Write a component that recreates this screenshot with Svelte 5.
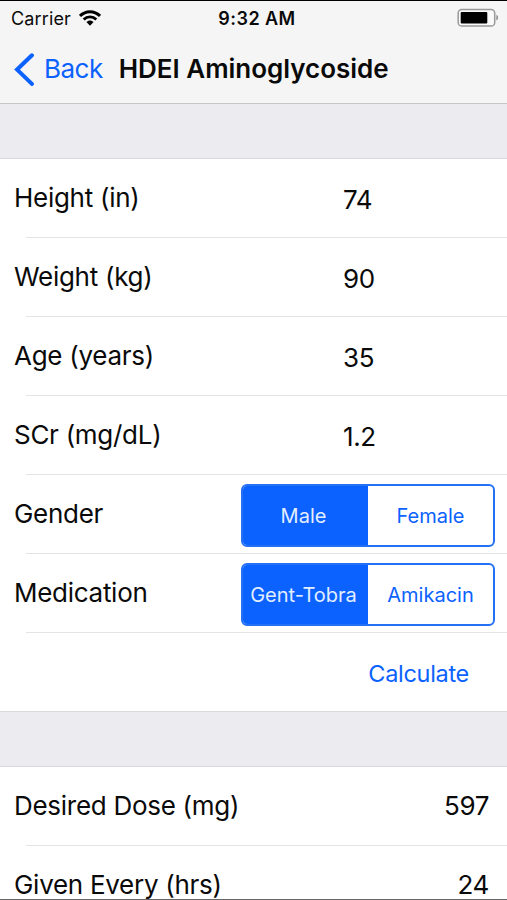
<script lang="ts">
  type Field = { label: string; value: string };
  type Choice = { label: string; options: string[]; selected: string };

  let fields: Field[] = [
    { label: 'Height (in)', value: '74' },
    { label: 'Weight (kg)', value: '90' },
    { label: 'Age (years)', value: '35' },
    { label: 'SCr (mg/dL)', value: '1.2' },
  ];

  let choices: Choice[] = [
    { label: 'Gender', options: ['Male', 'Female'], selected: 'Male' },
    { label: 'Medication', options: ['Gent-Tobra', 'Amikacin'], selected: 'Gent-Tobra' },
  ];

  let results: Field[] = [
    { label: 'Desired Dose (mg)', value: '597' },
    { label: 'Given Every (hrs)', value: '24' },
  ];
</script>

<div class="screen">
  <header>
    <div class="status-bar">
      <div class="carrier">
        <span>Carrier</span>
        <svg width="22" height="16" viewBox="0 0 22 16">
          <g fill="none" stroke="#000" stroke-width="2.9">
            <path d="M1 5.9C6.7 .3 15.3 .3 21 5.9" />
            <path d="M4.7 9.5C8.3 6 13.7 6 17.3 9.5" />
          </g>
          <path d="M7.4 12.1C9.5 10 12.5 10 14.6 12.1L11 15.7Z" />
        </svg>
      </div>
      <span class="time">9:32 AM</span>
      <svg class="battery" width="42" height="20" viewBox="0 0 42 20">
        <rect x="1.2" y="1.4" width="36.5" height="16.6" rx="3.6" fill="#fafafa" stroke="#999" stroke-width="1.5" />
        <rect x="3.7" y="3.9" width="26.6" height="11.6" rx="1" />
        <path d="M39.4 6.8C41.6 7.8 41.6 11.6 39.4 12.6Z" fill="#888" />
      </svg>
    </div>
    <div class="nav-bar">
      <button class="back">
        <svg width="20" height="34" viewBox="0 0 20 34">
          <path d="M17.9 3.3L3.1 17.6L17.9 31.9" fill="none" stroke="#0b62ff" stroke-width="4.1" stroke-linecap="round" />
        </svg>
        <span>Back</span>
      </button>
      <h1>HDEI Aminoglycoside</h1>
    </div>
  </header>

  <section>
    {#each fields as field}
      <div class="row">
        <span class="label">{field.label}</span>
        <span class="input">{field.value}</span>
      </div>
    {/each}
    {#each choices as choice}
      <div class="row">
        <span class="label">{choice.label}</span>
        <div class="segmented">
          {#each choice.options as option}
            <button class:selected={option === choice.selected} on:click={() => (choice.selected = option)}>
              {option}
            </button>
          {/each}
        </div>
      </div>
    {/each}
    <div class="row">
      <button class="calculate">Calculate</button>
    </div>
  </section>

  <section>
    {#each results as result}
      <div class="row">
        <span class="label">{result.label}</span>
        <span class="result">{result.value}</span>
      </div>
    {/each}
  </section>
</div>

<style>
  :global(body) {
    background: #ebebf0;
  }

  .screen {
    box-sizing: border-box;
    height: 900px;
    overflow: hidden;
    border-top: 1px solid #000;
    border-bottom: 1px solid #666;
    font-family: Inter, 'Liberation Sans', sans-serif;
    color: #0a0a0a;
  }

  button {
    margin: 0;
    padding: 0;
    border: 0;
    background: none;
    font: inherit;
    color: #0b62ff;
  }

  header {
    box-sizing: border-box;
    height: 103px;
    background: #f5f5f5;
    border-bottom: 1px solid #c6c6ca;
  }

  .status-bar {
    display: grid;
    grid-template-columns: 1fr auto 1fr;
    align-items: center;
    height: 34px;
    padding: 0 8px 0 11px;
    font-size: 18px;
  }

  .carrier {
    display: flex;
    align-items: center;
    gap: 8px;
    letter-spacing: 0.15px;
  }

  .time {
    padding-left: 4px;
    font-weight: 600;
    letter-spacing: 0.45px;
  }

  .battery {
    justify-self: end;
  }

  .nav-bar {
    display: flex;
    align-items: center;
    height: 67px;
    padding-left: 14px;
  }

  .back {
    display: flex;
    align-items: center;
    gap: 10px;
    font-size: 26px;
    letter-spacing: -0.5px;
  }

  h1 {
    margin: 0 0 0 16px;
    font-size: 26px;
    font-weight: 600;
    letter-spacing: -0.02px;
  }

  section {
    margin-top: 54px;
    background: #fff;
    border-top: 1px solid #d9d9dd;
    border-bottom: 1px solid #d9d9dd;
  }

  .row {
    box-sizing: border-box;
    display: flex;
    align-items: center;
    justify-content: space-between;
    height: 79px;
    padding: 0 12px 2px 14px;
    font-size: 26px;
    letter-spacing: -0.4px;
    /* separator starts past the label inset */
    background: linear-gradient(#e4e4e6, #e4e4e6) 26px 100% / 100% 1px no-repeat;
  }

  .row:last-child {
    height: 78px;
    background: none;
  }

  .label {
    letter-spacing: -0.28px;
  }

  .input {
    width: 152px;
    padding-top: 4px;
  }

  .result {
    padding-right: 6px;
  }

  .segmented {
    box-sizing: border-box;
    display: grid;
    grid-template-columns: 1fr 1fr;
    width: 254px;
    height: 63px;
    margin-top: 4px;
    overflow: hidden;
    border: 2px solid #2471f5;
    border-radius: 6px;
    font-size: 20px;
    letter-spacing: 0.1px;
  }

  .segmented .selected {
    padding-right: 4px;
    background: #0b62ff;
    color: #e2eeff;
  }

  .calculate {
    margin: 4px 26px 0 auto;
    font-size: 23.5px;
    letter-spacing: -0.3px;
  }
</style>
